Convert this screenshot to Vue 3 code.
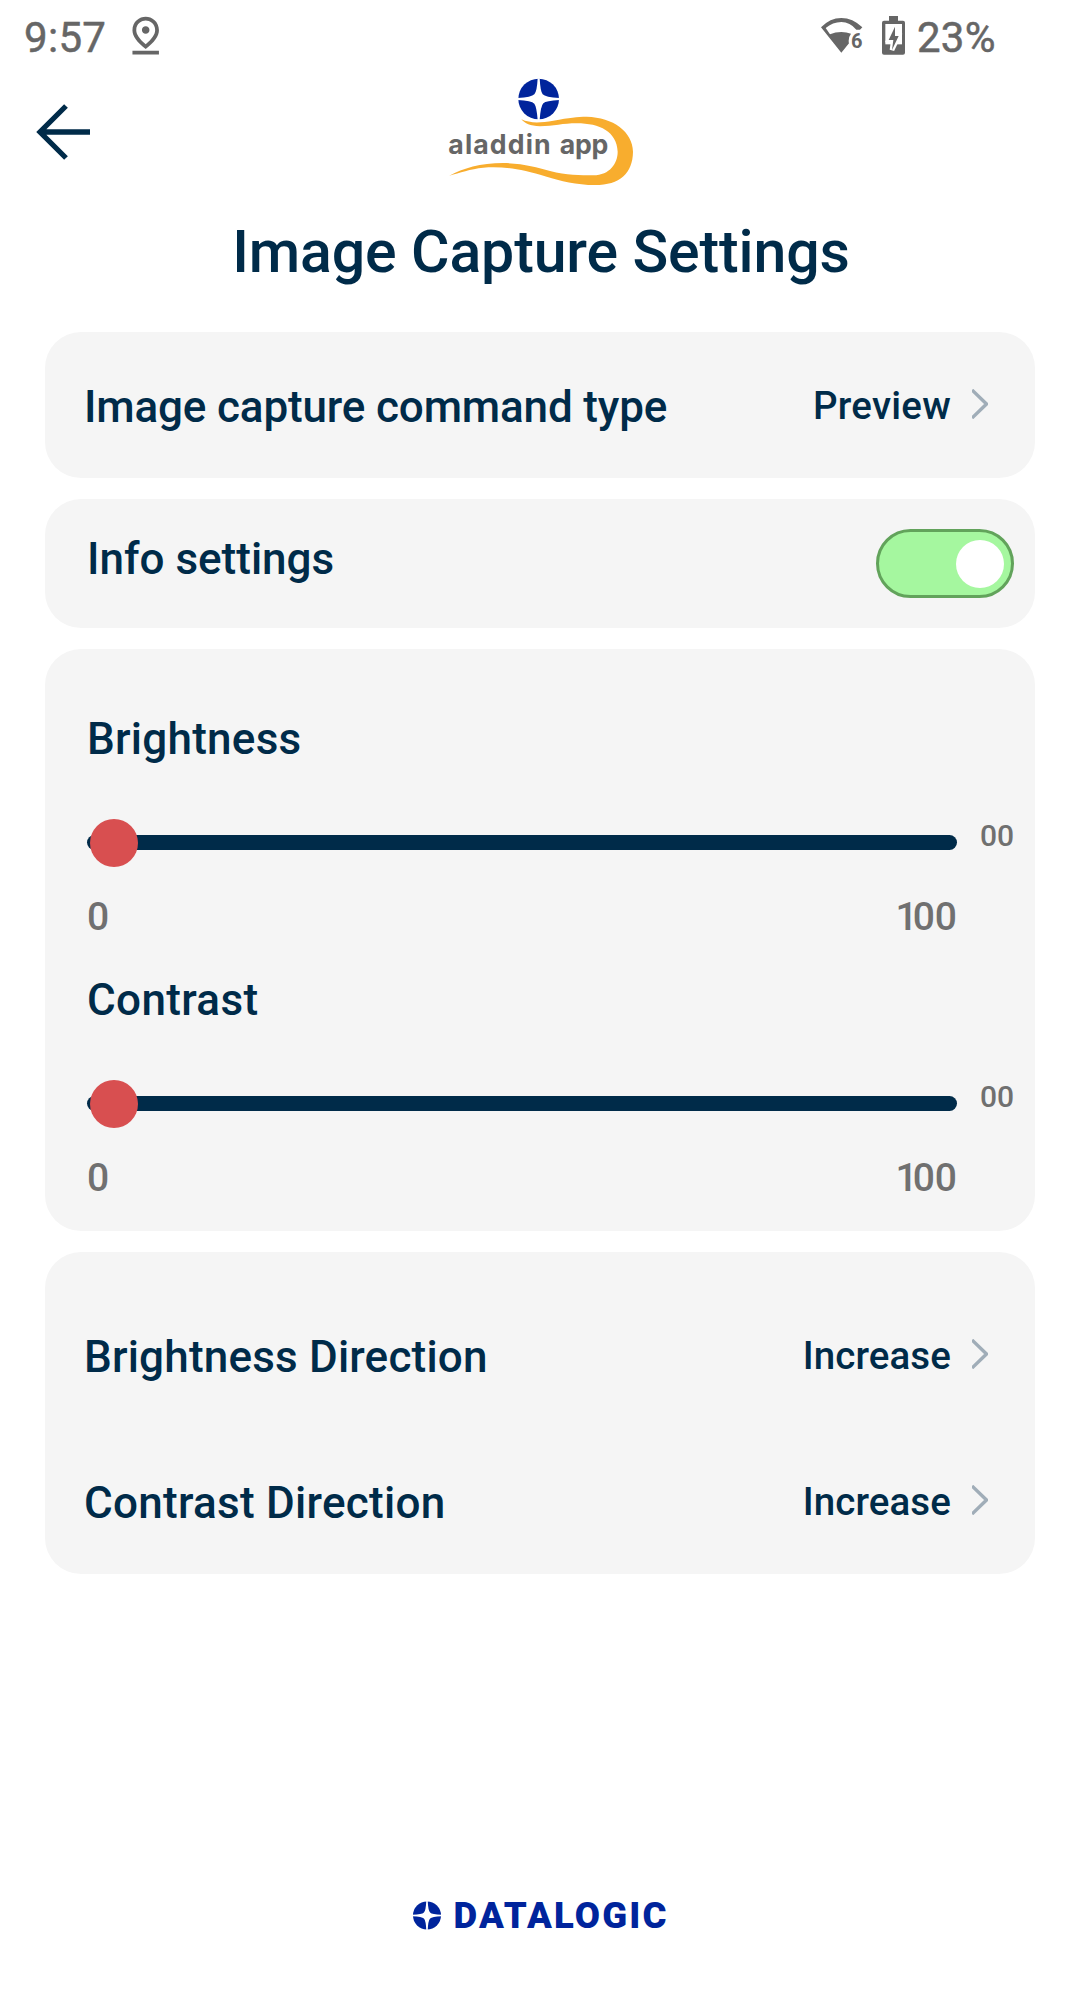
<script setup>
const sliders = [
  { name: 'Brightness', cls: 'brightness', value: '00' },
  { name: 'Contrast', cls: 'contrast', value: '00' },
]
const directions = [
  { name: 'Brightness Direction', cls: 'bdir', value: 'Increase' },
  { name: 'Contrast Direction', cls: 'cdir', value: 'Increase' },
]
</script>

<template>
  <div class="screen">
    <div class="status">
      <span class="clock">9:57</span>
      <svg class="pin" viewBox="0 0 24 24"><path d="M12 4c1.93 0 5 1.4 5 5.15 0 2.16-1.72 4.67-5 7.32-3.28-2.65-5-5.17-5-7.32C7 5.4 10.07 4 12 4m0-2C8.73 2 5 4.46 5 9.15c0 3.12 2.33 6.41 7 9.85 4.67-3.44 7-6.73 7-9.85C19 4.46 15.27 2 12 2zM12 7c-1.1 0-2 .9-2 2s.9 2 2 2 2-.9 2-2-.9-2-2-2zM5 20h14v2H5z" /></svg>
      <svg class="wifi" viewBox="120 48 132 114">
        <path d="M123 82Q150 54 184 54T247 82L240 89H229Q210 66 184 66Q158 66 137 84L150 103Q166 96 184 96Q200 96 213 101Q206 110 206 122Q206 128 207 130L184 158Z" />
        <text x="213" y="143" font-size="60">6</text>
      </svg>
      <svg class="battery" viewBox="306 48 69 117">
        <path d="M327 48h27v14h15q6 0 6 6v90q0 6-6 6h-57q-6 0-6-6V68q0-6 6-6h15z" />
        <path class="hole" d="M316 72h50v61h-50z" />
        <path class="bolt" d="M345 80L326 120h14l-4 30 20-42h-11z" />
      </svg>
      <span class="percent">23%</span>
    </div>

    <header class="header">
      <svg class="back" viewBox="0 0 56 56"><path d="M30 2L4 28L30 54M4 28H54" /></svg>
      <svg class="logo" viewBox="0 0 720 420">
        <circle cx="356" cy="117" r="61" fill="#00249c" />
        <path fill="#fff" d="M353 55L359 55Q361 95 368 103Q376 112 418 114L418 120Q378 122 370 130Q362 138 359 180L353 180Q350 140 343 131Q335 122 293 120L293 114Q335 112 343 103Q351 95 353 55Z" />
        <path fill="#f8ad2e" d="M304 178C330 190 360 189 400 182C450 173 470 170 500 170C580 172 638 215 639 275C638 340 600 375 525 375C470 375 420 362 380 350C300 326 250 319 190 323C150 327 120 338 88 347C130 325 180 309 250 309C310 310 350 322 390 333C440 346 480 346 520 346C570 345 593 310 593 275C590 215 540 190 470 190C430 190 400 198 360 199C330 198 315 190 304 178Z" />
        <text x="85" y="283" font-size="80" textLength="307">aladdin</text>
        <text x="419" y="283" font-size="80" textLength="146">app</text>
      </svg>
    </header>

    <h1 class="title">Image Capture Settings</h1>

    <section class="card row">
      <span class="label cmd">Image capture command type</span>
      <span class="value preview">Preview</span>
      <svg class="chevron" viewBox="0 0 16 30"><path d="M0 1L14.5 15L0 29" /></svg>
    </section>

    <section class="card info">
      <span class="label">Info settings</span>
      <span class="toggle"><span class="knob"></span></span>
    </section>

    <section class="card sliders">
      <div v-for="s in sliders" :key="s.name" class="slider">
        <div class="label" :class="s.cls">{{ s.name }}</div>
        <div class="control">
          <div class="track"><span class="thumb"></span></div>
          <span class="amount">{{ s.value }}</span>
        </div>
        <div class="range"><span>0</span><span class="max">100</span></div>
      </div>
    </section>

    <section class="card directions">
      <div v-for="d in directions" :key="d.name" class="row">
        <span class="label" :class="d.cls">{{ d.name }}</span>
        <span class="value increase">{{ d.value }}</span>
        <svg class="chevron" viewBox="0 0 16 30"><path d="M0 1L14.5 15L0 29" /></svg>
      </div>
    </section>

    <footer class="footer">
      <svg viewBox="0 -10 270 54">
        <circle cx="15" cy="15.5" r="14" fill="#00249c" />
        <path fill="#fff" d="M14.3 0.5H15.7Q16.1 10.5 18.1 12.5Q20 14.5 29.5 14.8V16.2Q20 16.5 18.1 18.5Q16.1 20.5 15.7 30.5H14.3Q13.9 20.5 11.9 18.5Q10 16.5 0.5 16.2V14.8Q10 14.5 11.9 12.5Q13.9 10.5 14.3 0.5Z" />
        <text x="41.5" y="28.3" font-size="36.5" textLength="213">DATALOGIC</text>
      </svg>
    </footer>
  </div>
</template>

<style>
body {
  margin: 0;
  background: #fff;
}
</style>

<style scoped>
.screen {
  width: 1080px;
  height: 1992px;
  display: flex;
  flex-direction: column;
  background: #fff;
  color: #002b49;
  font-family: Roboto, sans-serif;
  font-weight: 500;
  overflow: hidden;
  white-space: nowrap;
}
.status {
  height: 72px;
  flex: none;
  display: flex;
  align-items: flex-start;
  color: #666;
  fill: #666;
  font-size: 42px;
  font-weight: 400;
  letter-spacing: 0.3px;
  -webkit-text-stroke: 0.5px #666;
  line-height: 50px;
  box-sizing: border-box;
  padding-top: 13px;
}
.clock {
  width: 99px;
  margin-left: 24px;
}
.pin {
  width: 45.4px;
  height: 45.4px;
}
.wifi {
  width: 44px;
  height: 38px;
  margin: 3px 0 0 651.5px;
}
.wifi text {
  font-weight: 700;
  letter-spacing: 0;
}
.battery {
  width: 23px;
  height: 39px;
  margin: 3px 0 0 18px;
}
.hole {
  fill: #fff;
}
.bolt {
  stroke: #fff;
  stroke-width: 14px;
  paint-order: stroke;
}
.percent {
  margin-left: 12px;
}
.header {
  height: 128px;
  flex: none;
  display: flex;
  align-items: flex-start;
}
.back {
  width: 56px;
  height: 56px;
  margin: 32px 0 0 36px;
  fill: none;
  stroke: #002b49;
  stroke-width: 5.3px;
}
.logo {
  width: 240px;
  height: 140px;
  margin: -12px 0 0 328px;
}
.logo text {
  font-family: Inter, sans-serif;
  font-weight: 650;
  fill: #666;
}
.title {
  margin: 17px 0 0 2px;
  height: 115px;
  flex: none;
  text-align: center;
  font-size: 59px;
  line-height: 70px;
  font-weight: 500;
  letter-spacing: -0.13px;
}
.card {
  width: 990px;
  margin: 0 0 21px 45px;
  border-radius: 36px;
  background: #f5f5f5;
  box-sizing: border-box;
  flex: none;
}
.row {
  display: flex;
  align-items: flex-start;
  height: 146px;
}
.label {
  font-size: 44px;
  line-height: 52px;
}
.row .label {
  margin: 49px auto 0 39px;
}
.cmd {
  letter-spacing: -0.15px;
}
.brightness {
  letter-spacing: 0.25px;
}
.contrast {
  letter-spacing: 0.35px;
}
.bdir {
  letter-spacing: 0.19px;
}
.cdir {
  letter-spacing: 0.28px;
}
.value {
  font-size: 38.5px;
  line-height: 46px;
  margin-top: 51px;
}
.preview {
  letter-spacing: 0.25px;
}
.increase {
  letter-spacing: 0.1px;
}
.chevron {
  width: 16px;
  height: 30px;
  margin: 57px 47px 0 21px;
  fill: none;
  stroke: #a0adb8;
  stroke-width: 3.4px;
}
.info {
  height: 129px;
  display: flex;
  justify-content: space-between;
  align-items: flex-start;
  padding: 30px 21px 0 42px;
}
.info .label {
  margin-top: 4px;
}
.toggle {
  width: 138px;
  height: 69px;
  box-sizing: border-box;
  border: 3px solid #62a35b;
  border-radius: 35px;
  background: #a5f79f;
  display: flex;
  justify-content: flex-end;
  align-items: center;
  padding-right: 7px;
}
.knob {
  width: 48px;
  height: 48px;
  border-radius: 50%;
  background: #fff;
}
.sliders {
  height: 582px;
  padding: 64px 0 0 42px;
}
.slider {
  height: 261px;
}
.control {
  display: flex;
  align-items: flex-start;
  height: 48px;
  margin-top: 54px;
}
.track {
  width: 870px;
  height: 15px;
  margin-top: 16px;
  border-radius: 8px;
  background: #002b49;
  display: flex;
  align-items: center;
}
.thumb {
  width: 48px;
  height: 48px;
  flex: none;
  margin: 1px 0 0 3px;
  border-radius: 50%;
  background: #d84f50;
}
.amount {
  margin: -1px 0 0 23px;
  font-size: 30px;
  line-height: 36px;
  color: #707070;
}
.range {
  width: 870px;
  margin-top: 27px;
  display: flex;
  justify-content: space-between;
  font-size: 39px;
  line-height: 46px;
  color: #707070;
}
.max::first-letter {
  letter-spacing: -5px;
}
.directions {
  height: 322px;
  padding-top: 30px;
}
.footer {
  margin-top: auto;
  flex: none;
  height: 102px;
  padding-left: 412px;
}
.footer svg {
  display: block;
  width: 270px;
  height: 54px;
}
.footer text {
  font-weight: 900;
  fill: #00249c;
}
</style>
